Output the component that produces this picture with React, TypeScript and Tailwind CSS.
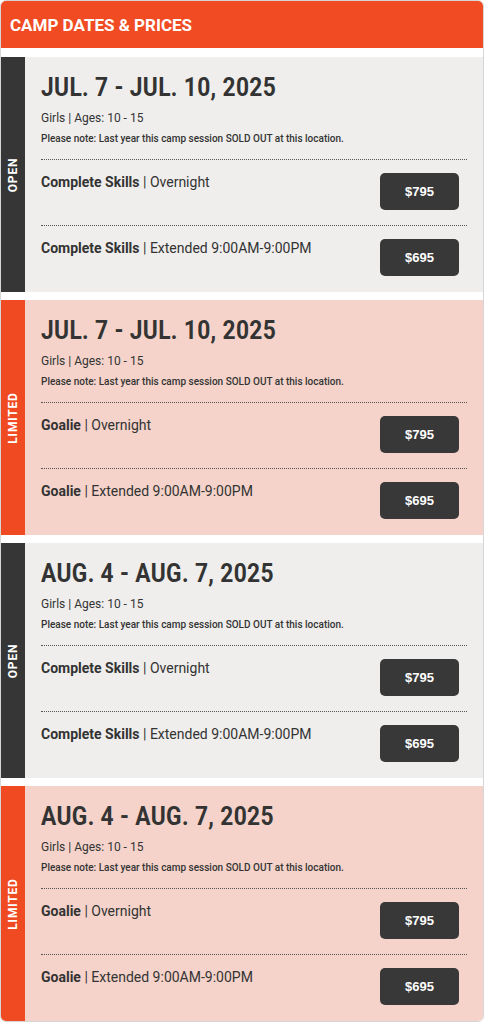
import React from "react";

type Row = { bold: string; rest: string; price: string };
type Session = { status: "OPEN" | "LIMITED"; dates: string; rows: Row[] };

const sessions: Session[] = [
  {
    status: "OPEN",
    dates: "JUL. 7 - JUL. 10, 2025",
    rows: [
      { bold: "Complete Skills", rest: "Overnight", price: "$795" },
      { bold: "Complete Skills", rest: "Extended 9:00AM-9:00PM", price: "$695" },
    ],
  },
  {
    status: "LIMITED",
    dates: "JUL. 7 - JUL. 10, 2025",
    rows: [
      { bold: "Goalie", rest: "Overnight", price: "$795" },
      { bold: "Goalie", rest: "Extended 9:00AM-9:00PM", price: "$695" },
    ],
  },
  {
    status: "OPEN",
    dates: "AUG. 4 - AUG. 7, 2025",
    rows: [
      { bold: "Complete Skills", rest: "Overnight", price: "$795" },
      { bold: "Complete Skills", rest: "Extended 9:00AM-9:00PM", price: "$695" },
    ],
  },
  {
    status: "LIMITED",
    dates: "AUG. 4 - AUG. 7, 2025",
    rows: [
      { bold: "Goalie", rest: "Overnight", price: "$795" },
      { bold: "Goalie", rest: "Extended 9:00AM-9:00PM", price: "$695" },
    ],
  },
];

function SessionCard({ s }: { s: Session }) {
  const open = s.status === "OPEN";
  return (
    <div className={`flex h-[235px] ${open ? "bg-[#efeeec]" : "bg-[#f5d3ca]"}`}>
      <div
        className={`w-[24px] shrink-0 flex items-center justify-center ${
          open ? "bg-[#363636]" : "bg-[#f04a23]"
        }`}
      >
        <span className="-rotate-90 whitespace-nowrap text-white text-[12px] font-bold tracking-[0.8px] font-['Roboto',sans-serif]">
          {s.status}
        </span>
      </div>
      <div className="flex-1 px-4 pt-[14px]">
        <div className="text-[26px] leading-[32px] font-bold text-[#333] font-['Roboto',sans-serif] tracking-[0.4px] whitespace-nowrap origin-left scale-x-[0.875]">
          {s.dates}
        </div>
        <div className="mt-[7px] text-[12px] leading-[16px] text-[#333] font-['Roboto',sans-serif]">
          Girls | Ages: 10 - 15
        </div>
        <div className="mt-[6px] text-[10px] leading-[14px] font-medium text-[#333] font-['Roboto',sans-serif]">
          Please note: Last year this camp session SOLD OUT at this location.
        </div>
        <div className="mt-[13px]">
          {s.rows.map((r, i) => (
            <div
              key={i}
              className="border-t border-dotted border-[#555] flex items-start justify-between pt-[13px] pb-[15px] pr-2"
            >
              <div className="text-[14px] leading-[18px] text-[#333] font-['Roboto',sans-serif]">
                <span className="font-bold">{r.bold}</span> | {r.rest}
              </div>
              <div className="w-[79px] h-[37px] rounded-[5px] bg-[#383838] text-white text-[13px] font-bold flex items-center justify-center font-['Liberation_Sans',sans-serif]">
                {r.price}
              </div>
            </div>
          ))}
        </div>
      </div>
    </div>
  );
}

export default function App() {
  return (
    <div className="bg-white w-[485px] min-h-[1024px]">
      <div className="w-[484px] border border-[#d6d6d6] rounded-[6px] overflow-hidden bg-white">
        <div className="h-[47px] bg-[#f14b24] flex items-center px-[9px] pt-[2px]">
          <span className="text-white text-[17px] font-bold font-['Roboto',sans-serif]">
            CAMP DATES &amp; PRICES
          </span>
        </div>
        <div className="flex flex-col gap-2 pt-[9px]">
          {sessions.map((s, i) => (
            <SessionCard key={i} s={s} />
          ))}
        </div>
      </div>
    </div>
  );
}
